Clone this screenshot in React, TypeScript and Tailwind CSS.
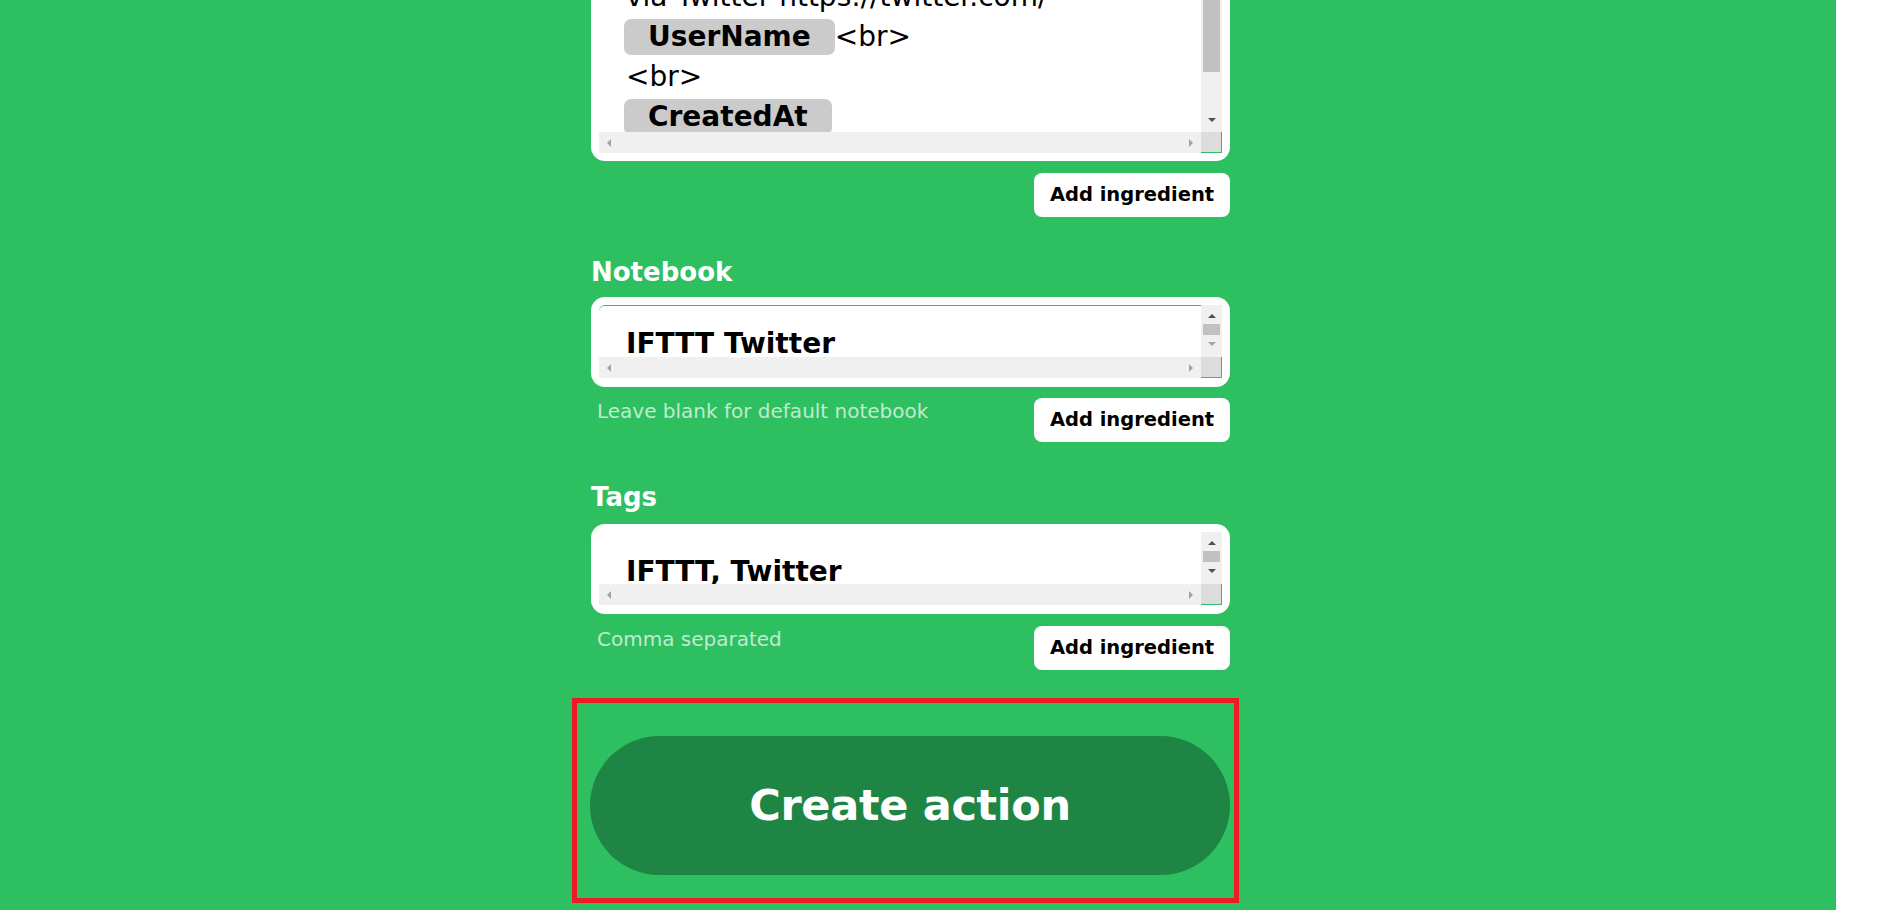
import React from 'react';

const Arrow = ({ dir, dark }: { dir: 'up' | 'down' | 'left' | 'right'; dark?: boolean }) => {
  const points = {
    up: '0,4 4,0 8,4',
    down: '0,0 8,0 4,4',
    left: '4,0 4,8 0,4',
    right: '0,0 4,4 0,8',
  }[dir];
  const vertical = dir === 'up' || dir === 'down';
  return (
    <svg width={vertical ? 8 : 4} height={vertical ? 4 : 8} viewBox={vertical ? '0 0 8 4' : '0 0 4 8'}>
      <polygon points={points} fill={dark ? '#505050' : '#a3a3a3'} />
    </svg>
  );
};

const HScroll = () => (
  <div className="flex h-[21px]">
    <div className="flex-1 bg-[#f0f0f0] flex items-center justify-between px-[8px]">
      <Arrow dir="left" />
      <Arrow dir="right" />
    </div>
    <div className="w-[21px] bg-[#dcdcdc] border-r border-b border-[#2ebf61]" />
  </div>
);

const Pill = ({ children }: { children: React.ReactNode }) => (
  <span className="-ml-[2px] inline-flex items-center h-[36px] px-[24px] rounded-[7px] bg-[#cbcbcb] font-bold">
    {children}
  </span>
);

const AddButton = () => (
  <button className="w-[196px] h-[44px] shrink-0 rounded-[8px] bg-white flex items-center justify-center text-[19.5px] font-bold text-black">
    Add ingredient
  </button>
);

const Label = ({ children, className }: { children: React.ReactNode; className: string }) => (
  <h3 className={`text-[26px] leading-[30px] font-bold text-white ${className}`}>{children}</h3>
);

const SmallField = ({ value, padTop, notebook }: { value: string; padTop: string; notebook?: boolean }) => (
  <div className="rounded-[14px] bg-white px-2 pt-2 pb-[9px]">
    <div className="flex flex-col h-[73px]">
      <div className="flex h-[52px]">
        <div
          className={`flex-1 overflow-hidden pl-[27px] ${padTop} ${
            notebook ? 'border-t border-[#2ebf61] rounded-tl-[6px]' : ''
          }`}
        >
          <div className="text-[28px] leading-[40px] font-bold text-black whitespace-nowrap">{value}</div>
        </div>
        <div className="w-[21px] bg-[#f0f0f0] flex flex-col items-center pt-[9px]">
          <Arrow dir="up" dark />
          <div className="mt-[6px] w-[17px] h-[11px] bg-[#c1c1c1]" />
          <div className="mt-[7px]">
            <Arrow dir="down" dark={!notebook} />
          </div>
        </div>
      </div>
      <HScroll />
    </div>
  </div>
);

export default function App() {
  return (
    <div className="w-[1904px] h-[916px] bg-white overflow-hidden font-['DejaVu_Sans',sans-serif]">
      <div className="w-[1836px] h-[910px] bg-[#2ebf61] overflow-hidden">
        <div className="ml-[591px] w-[639px] flex flex-col">
          {/* Body field, scrolled */}
          <div className="-mt-[40px] rounded-[14px] bg-white p-2">
            <div className="flex flex-col h-[185px]">
              <div className="flex h-[164px]">
                <div className="flex-1 overflow-hidden pl-[27px] pt-[9px] text-[28px] text-black whitespace-nowrap">
                  <div className="h-[40px] flex items-center">via Twitter https://twitter.com/</div>
                  <div className="h-[40px] flex items-center">
                    <Pill>UserName</Pill>
                    <span>&lt;br&gt;</span>
                  </div>
                  <div className="h-[40px] flex items-center">&lt;br&gt;</div>
                  <div className="h-[40px] flex items-center">
                    <Pill>CreatedAt</Pill>
                  </div>
                  <div className="h-[40px] flex items-center">&lt;br&gt;</div>
                </div>
                <div className="w-[21px] bg-[#f0f0f0] flex flex-col items-center">
                  <div className="w-[17px] h-[104px] bg-[#c1c1c1]" />
                  <div className="mt-[46px]">
                    <Arrow dir="down" dark />
                  </div>
                </div>
              </div>
              <HScroll />
            </div>
          </div>
          <div className="mt-3 flex justify-end">
            <AddButton />
          </div>

          {/* Notebook */}
          <Label className="mt-[40px]">Notebook</Label>
          <div className="mt-[10px]">
            <SmallField value="IFTTT Twitter" padTop="pt-[18px]" notebook />
          </div>
          <div className="mt-[11px] flex justify-between items-start">
            <p className="ml-[6px] mt-px text-[20px] leading-[24px] text-[#c0ebcf]">Leave blank for default notebook</p>
            <AddButton />
          </div>

          {/* Tags */}
          <Label className="mt-[40px]">Tags</Label>
          <div className="mt-3">
            <SmallField value="IFTTT, Twitter" padTop="pt-[20px]" />
          </div>
          <div className="mt-3 flex justify-between items-start">
            <p className="ml-[6px] mt-px text-[20px] leading-[24px] text-[#c0ebcf]">Comma separated</p>
            <AddButton />
          </div>

          {/* Submit */}
          <div className="relative mt-[66px] -ml-px">
            <button className="w-[640px] h-[139px] rounded-full bg-[#1f8545] text-white text-[43px] font-bold tracking-[-0.3px] flex items-center justify-center">
              Create action
            </button>
            <div className="absolute -left-[18px] -right-[9px] -top-[38px] -bottom-[28px] border-[5px] border-[#ed1c24] pointer-events-none" />
          </div>
        </div>
      </div>
    </div>
  );
}
